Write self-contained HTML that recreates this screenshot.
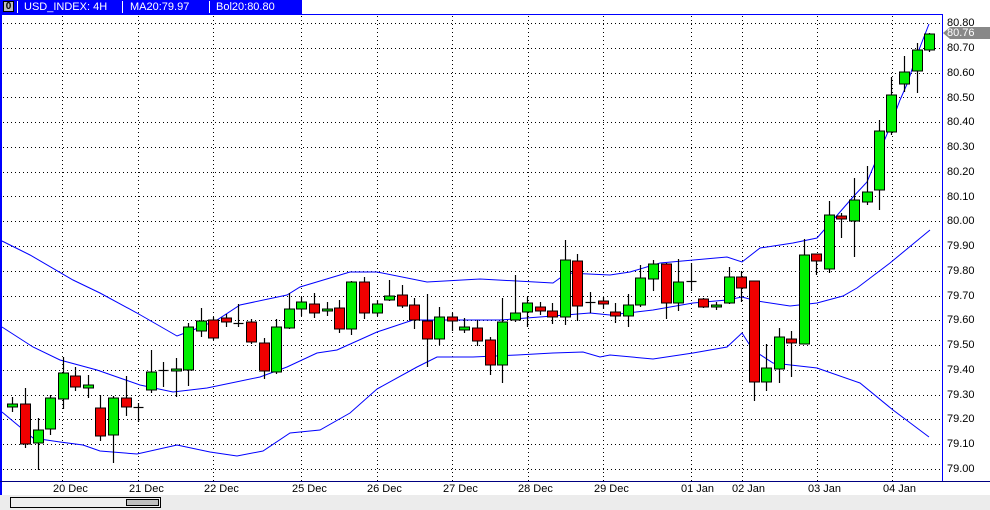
<!DOCTYPE html>
<html><head><meta charset="utf-8"><style>
html,body{margin:0;padding:0;background:#fff;}
body{width:990px;height:510px;position:relative;overflow:hidden;font-family:"Liberation Sans",sans-serif;}
.hdr{position:absolute;left:0;top:0;width:302px;height:14px;background:#0000ff;color:#fff;font-size:11px;line-height:14px;}
.hdr span{position:absolute;top:0;}
.sep{position:absolute;top:1px;width:1px;height:12px;background:#fff;}
.pl{position:absolute;left:947px;font-size:11px;color:#000;line-height:12px;}
.dl{position:absolute;top:483px;font-size:11px;color:#000;line-height:12px;}
</style></head><body>
<svg id="c" width="990" height="510" style="position:absolute;left:0;top:0" xmlns="http://www.w3.org/2000/svg">
<rect x="0" y="0" width="2" height="495" fill="#0000ff"/>
<line x1="2" y1="14.5" x2="942" y2="14.5" stroke="#0000ff"/>
<line x1="942.5" y1="14" x2="942.5" y2="481" stroke="#0000ff"/>
<line x1="0" y1="481.5" x2="990" y2="481.5" stroke="#000080"/>
<rect x="0" y="495" width="990" height="15" fill="#ececec"/>
<rect x="10.5" y="497.5" width="150" height="10" fill="#eee" stroke="#000"/>
<rect x="126.5" y="499.5" width="32" height="6" fill="#c0c0c0" stroke="#000"/>
<g id="grid"></g>
<g id="bands" fill="none" stroke="#0000ff" stroke-width="1"></g>
<g id="candles"></g>
<polygon points="943,33 950,27 990,27 990,39 950,39" fill="#888"/>
</svg>
<div class="hdr">
<span style="left:3px;top:1px;width:11px;height:11px;background:#c0c0c0;border:1px solid #000;box-sizing:border-box;color:#000;font-size:10px;line-height:10px;text-align:center;font-weight:bold">0</span>
<div class="sep" style="left:17px"></div><span style="left:24px">USD_INDEX: 4H</span>
<div class="sep" style="left:122px"></div><span style="left:130px">MA20:79.97</span>
<div class="sep" style="left:209px"></div><span style="left:216px">Bol20:80.80</span>
</div>
<div class="pl" style="top:17px">80.80</div>
<div class="pl" style="top:27px;color:#fff">80.76</div>
<div class="pl" style="top:42px">80.70</div>
<div class="pl" style="top:67px">80.60</div>
<div class="pl" style="top:92px">80.50</div>
<div class="pl" style="top:116px">80.40</div>
<div class="pl" style="top:141px">80.30</div>
<div class="pl" style="top:166px">80.20</div>
<div class="pl" style="top:191px">80.10</div>
<div class="pl" style="top:215px">80.00</div>
<div class="pl" style="top:240px">79.90</div>
<div class="pl" style="top:265px">79.80</div>
<div class="pl" style="top:290px">79.70</div>
<div class="pl" style="top:314px">79.60</div>
<div class="pl" style="top:339px">79.50</div>
<div class="pl" style="top:364px">79.40</div>
<div class="pl" style="top:389px">79.30</div>
<div class="pl" style="top:413px">79.20</div>
<div class="pl" style="top:438px">79.10</div>
<div class="pl" style="top:463px">79.00</div>
<div class="dl" style="left:53px">20 Dec</div>
<div class="dl" style="left:129px">21 Dec</div>
<div class="dl" style="left:204px">22 Dec</div>
<div class="dl" style="left:292px">25 Dec</div>
<div class="dl" style="left:367px">26 Dec</div>
<div class="dl" style="left:443px">27 Dec</div>
<div class="dl" style="left:518px">28 Dec</div>
<div class="dl" style="left:594px">29 Dec</div>
<div class="dl" style="left:681px">01 Jan</div>
<div class="dl" style="left:732px">02 Jan</div>
<div class="dl" style="left:808px">03 Jan</div>
<div class="dl" style="left:883px">04 Jan</div>
<script>
var NS="http://www.w3.org/2000/svg";
function el(t,a,p){var e=document.createElementNS(NS,t);for(var k in a)e.setAttribute(k,a[k]);p.appendChild(e);return e;}
var g=document.getElementById("grid");
for(var i=0;i<19;i++){var y=Math.round(23+i*24.78)+0.5;el("line",{x1:3,y1:y,x2:942,y2:y,stroke:"#000","stroke-dasharray":"1 3"},g);}
[62,138,213,301,377,452,528,603,691,742,817,892].forEach(function(x){el("line",{x1:x+0.5,y1:16,x2:x+0.5,y2:481,stroke:"#000","stroke-dasharray":"1 3"},g);});
var b=document.getElementById("bands");
var up=[[2,241],[30,255],[73,280],[100,293],[137,313],[177,336],[193,330],[217,320],[240,305],[287,295],[300,287],[350,272],[377,272],[427,282],[480,279],[553,283],[567,273],[610,275],[630,272],[660,263],[727,257],[742,262],[760,248],[793,243],[817,238],[840,212],[853,197],[867,182],[875,163],[890,127],[900,100],[908,82],[915,60],[929,24]];
var mid=[[2,327],[33,347],[60,360],[97,370],[140,385],[173,392],[207,388],[260,377],[287,367],[317,353],[337,350],[377,332],[413,320],[453,320],[500,320],[553,316],[590,313],[610,315],[653,310],[693,303],[727,300],[742,297],[757,301],[790,306],[817,303],[843,296],[857,288],[890,263],[930,230]];
var lo=[[2,412],[20,427],[33,438],[60,442],[83,445],[100,451],[137,454],[177,445],[210,452],[237,456],[263,451],[290,433],[320,430],[350,413],[377,389],[417,367],[437,357],[473,357],[517,355],[553,353],[583,352],[600,357],[610,355],[653,359],[693,353],[727,347],[742,333],[753,350],[773,363],[817,368],[860,383],[893,410],[929,437]];
[up,mid,lo].forEach(function(p){el("polyline",{points:p.map(function(q){return q.join(",")}).join(" ")},b);});
var C=[[12,397,412,404,407,"g"],[25,388,448,404,444,"r"],[38,418,470,430,443,"g"],[50,395,435,398,429,"g"],[63,357,409,373,399,"g"],[75,367,391,376,387,"r"],[88,375,398,385,388,"g"],[100,395,441,408,436,"r"],[113,396,463,398,435,"g"],[126,376,416,398,407,"r"],[138,403,422,407,407,"x"],[151,350,393,372,390,"g"],[163,362,387,370,371,"x"],[176,358,397,369,371,"g"],[188,323,386,327,370,"g"],[201,308,337,321,331,"g"],[213,317,340,320,338,"r"],[226,314,327,318,322,"r"],[238,304,327,323,323,"x"],[251,319,344,322,342,"r"],[264,338,379,343,371,"r"],[276,319,374,327,372,"g"],[289,293,329,309,328,"g"],[301,297,316,302,309,"g"],[314,293,318,304,313,"r"],[327,302,316,309,311,"g"],[339,300,333,308,329,"r"],[351,281,335,282,329,"g"],[364,277,319,282,313,"r"],[377,300,316,304,313,"g"],[389,280,301,296,300,"g"],[402,285,308,295,306,"r"],[414,298,329,305,320,"r"],[427,294,367,321,339,"r"],[439,307,345,317,339,"g"],[452,313,331,317,321,"r"],[464,318,333,327,330,"g"],[477,320,346,328,341,"r"],[490,337,375,340,365,"r"],[502,298,383,322,365,"g"],[515,275,322,313,320,"g"],[527,297,327,303,312,"g"],[540,302,315,307,311,"r"],[552,303,324,311,317,"r"],[565,240,325,260,317,"g"],[577,254,321,261,306,"r"],[590,292,313,302,302,"x"],[603,297,309,301,304,"r"],[615,303,323,312,316,"r"],[628,294,327,305,316,"g"],[640,265,307,278,305,"g"],[653,260,291,264,279,"g"],[666,263,319,264,303,"r"],[678,259,311,282,303,"g"],[691,263,291,281,281,"x"],[703,298,308,299,307,"r"],[716,302,310,305,307,"g"],[729,267,304,277,303,"g"],[741,271,302,277,288,"r"],[754,281,401,281,382,"r"],[766,344,391,368,382,"g"],[779,328,383,337,369,"g"],[791,331,377,339,343,"r"],[804,239,344,255,344,"g"],[816,254,275,254,261,"r"],[829,201,273,215,269,"g"],[841,213,238,216,219,"r"],[854,178,257,200,221,"g"],[867,166,205,192,202,"g"],[879,120,210,131,190,"g"],[891,77,135,95,132,"g"],[904,56,92,72,84,"g"],[917,43,93,50,71,"g"],[929,33,52,34,50,"g"]];
var cg=document.getElementById("candles");
C.forEach(function(c){var x=c[0]+0.5;
el("line",{x1:x,y1:c[1],x2:x,y2:c[2],stroke:"#000","stroke-width":1.2},cg);
if(c[5]=="x"){el("line",{x1:x-5,y1:c[3]+0.5,x2:x+5,y2:c[3]+0.5,stroke:"#000","stroke-width":1.2},cg);}
else{var h=Math.max(c[4]-c[3],2);el("rect",{x:x-5,y:c[3],width:10,height:h,fill:c[5]=="g"?"#00f000":"#f00000",stroke:"#000","stroke-width":1},cg);}
});
</script>
</body></html>
